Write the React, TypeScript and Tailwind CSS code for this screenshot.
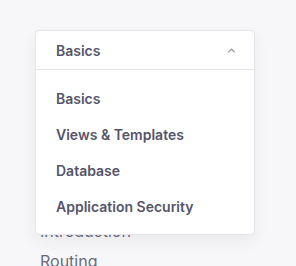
import { ChevronUp } from "lucide-react";

const sections = ["Basics", "Views & Templates", "Database", "Application Security"];

export default function App() {
  return (
    <div
      className="relative h-[266px] w-[296px] overflow-hidden bg-[#f7f7f9]"
      style={{ fontFamily: "Inter, 'Noto Sans', sans-serif" }}
    >
      {/* sidebar links sitting under the open menu */}
      <nav className="flex flex-col gap-[6px] pl-[40px] pt-[219px] text-[16px] text-[#6b6b7b]">
        <span>Introduction</span>
        <span>Routing</span>
      </nav>

      <div className="absolute left-[35px] top-[30px] w-[220px] rounded-[4px] border border-[#e4e4ea] bg-white shadow-[0_6px_16px_rgba(0,0,0,0.06)]">
        <button className="flex h-[39px] w-full items-center justify-between border-b border-[#e4e4ea] pl-[20px] pr-[17px] text-[14px] font-semibold text-[#55556a]">
          Basics
          <ChevronUp className="h-[11px] w-[11px] text-[#8a8a99]" strokeWidth={2.5} aria-hidden />
        </button>
        <ul className="flex flex-col py-[10px]">
          {sections.map((s) => (
            <li
              key={s}
              className="flex h-9 items-center pl-[20px] text-[14px] font-semibold text-[#55556a]"
            >
              {s}
            </li>
          ))}
        </ul>
      </div>
    </div>
  );
}
